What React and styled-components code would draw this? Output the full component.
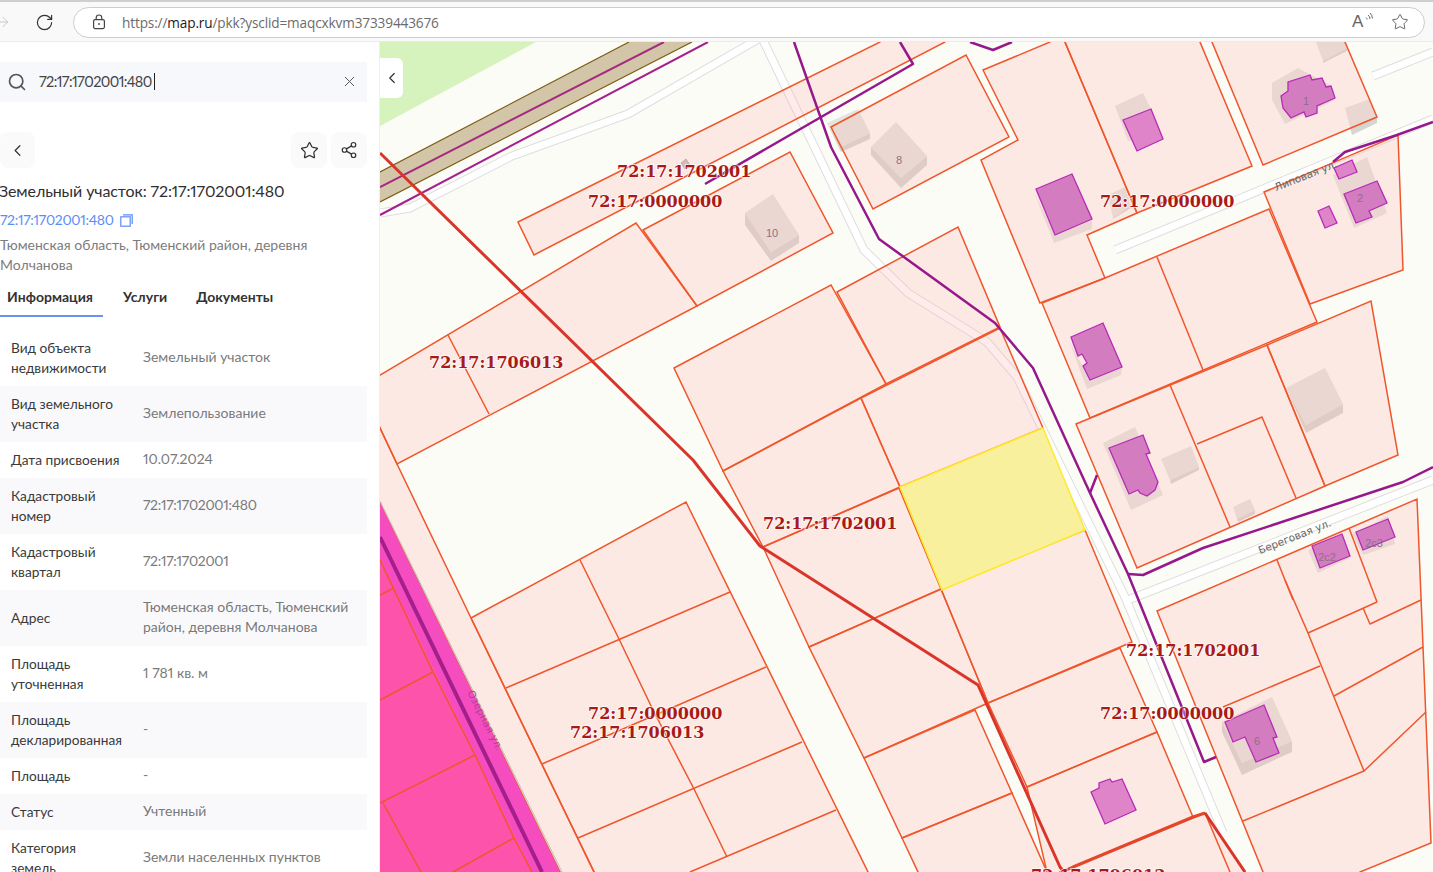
import React from 'react';
import styled, { createGlobalStyle } from 'styled-components';
import { ArrowRight, ChevronLeft, RotateCw, Search, Share2, Star, X } from 'lucide-react';

const GlobalStyle = createGlobalStyle`
  html, body { margin: 0; padding: 0; background: #fff; overflow: hidden; }
  * { box-sizing: border-box; }
`;

const rows = [
  { label: 'Вид объекта недвижимости', value: 'Земельный участок' },
  { label: 'Вид земельного участка', value: 'Землепользование' },
  { label: 'Дата присвоения', value: '10.07.2024' },
  { label: 'Кадастровый номер', value: '72:17:1702001:480', numeric: true },
  { label: 'Кадастровый квартал', value: '72:17:1702001', numeric: true },
  { label: 'Адрес', value: 'Тюменская область, Тюменский район, деревня Молчанова' },
  { label: 'Площадь уточненная', value: '1 781 кв. м' },
  { label: 'Площадь декларированная', value: '-' },
  { label: 'Площадь', value: '-' },
  { label: 'Статус', value: 'Учтенный' },
  { label: 'Категория\nземель', value: 'Земли населенных пунктов' },
];

// map geometry, in page pixels
const roads = [
  '380,213 410,208 512,156 628,114 760,38',
  '762,38 864,250 908,293 987,342 1017,377 1125,597 1223,833',
  '1128,600 1433,480',
  '1115,250 1433,119',
  '1373,76 1433,52',
];

const grayBuildings = [
  { top: '745,213 773,194 799,235 771,252', side: '745,213 771,252 799,235 799,243 771,261 745,225' },
  { top: '871,147 896,122 927,156 901,178', side: '871,147 901,178 927,156 927,165 901,188 871,155' },
  { top: '827,123 858,109 870,133 841,147', side: '827,123 841,147 870,133 870,139 841,152' },
  { top: '1316,42 1345,42 1347,48 1323,61', side: '1323,61 1347,48 1347,51 1323,63' },
  { top: '1345,108 1370,99 1377,117 1350,127', side: '1350,127 1377,117 1377,123 1352,135' },
  { top: '1108,195 1125,187 1131,205 1113,218', side: '1113,218 1131,205 1131,208 1113,219' },
  { top: '1286,388 1325,368 1343,404 1306,425', side: '1286,388 1306,425 1343,404 1343,413 1306,433' },
  { top: '1161,459 1191,446 1199,467 1170,480', side: '1170,480 1199,467 1199,470 1171,484' },
  { top: '1233,507 1250,499 1255,510 1237,519', side: '1237,519 1255,510 1255,514 1238,522' },
  { top: '1272,83 1298,68 1330,85 1335,100 1285,124 1272,100' },
  { top: '1115,106 1143,93 1151,109 1163,139 1128,141' },
  { top: '1034,192 1054,243 1092,229 1092,219 1055,235' },
  { top: '1333,175 1367,157 1387,213 1354,228' },
  { top: '1070,343 1087,389 1121,375 1122,367 1090,380' },
  { top: '1103,443 1135,427 1163,495 1131,510' },
  { top: '1222,722 1272,697 1292,741 1242,763', side: '1222,722 1242,763 1292,741 1292,752 1242,775 1222,732' },
  { top: '1308,550 1342,536 1350,558 1318,573' },
  { top: '1352,534 1388,516 1395,544 1363,555' },
];

// edges that fall on the map border run a little past it, so they stay unseen
const parcels = [
  '518,222 880,42 880,34 945,34 945,42 534,255',
  '643,230 790,152 833,233 697,306',
  '370,381 636,223 697,306 397,464 370,407',
  '674,368 831,285 886,384 723,471',
  '837,292 958,227 1000,327 886,384',
  '861,398 1000,328 1043,428 900,487',
  '723,471 861,398 900,487 763,547',
  '763,547 899,488 941,589 809,647',
  '809,647 941,589 988,703 864,758',
  '941,589 1085,530 1132,642 988,703',
  '864,758 975,710 1012,793 902,838',
  '902,838 1012,793 1047,872 1047,880 918,880 918,872',
  '988,703 1120,648 1157,732 1027,787',
  '1027,787 1157,732 1193,817 1073,867 1060,872 1060,880 1047,880 1047,872',
  '1073,867 1205,813 1245,872 1245,880 1060,880 1060,872',
  '831,127 966,55 1009,137 873,209',
  '983,70 1050,42 1050,34 1065,34 1065,42 1137,213 1087,235 1105,278 1040,303 981,160 1018,140',
  '1065,42 1065,34 1200,34 1200,42 1252,166 1137,213',
  '1212,42 1212,34 1345,34 1345,42 1377,117 1263,165',
  '1264,192 1398,135 1403,270 1310,304',
  '1042,303 1105,278 1269,209 1317,322 1090,418',
  '1267,345 1371,301 1398,455 1325,486',
  '1076,424 1267,345 1325,486 1137,568',
  '1157,611 1417,499 1431,843 1360,872 1360,880 1263,880 1263,872',
  '471,618 686,502 868,872 868,880 594,880 594,872',
  '370,407 397,464 471,618 594,872 594,880 560,880 560,872 370,483',
];

const dividers = [
  '448,335 489,414',
  '1157,257 1203,370',
  '1170,385 1230,527',
  '1197,444 1262,417 1296,498',
  '1243,821 1364,771 1426,712',
  '1223,707 1320,666',
  '1285,580 1308,633 1364,771',
  '1308,633 1377,602',
  '1277,560 1293,600',
  '1349,528 1377,602',
  '1363,608 1370,624 1421,600',
  '1334,696 1423,647',
  '506,688 730,592',
  '542,764 766,667',
  '578,838 802,742',
  '836,810 690,872',
  '580,560 619,639 653,710 694,789 727,857',
  '1205,813 1230,872',
];

const pinkLines = [
  '380,560 433,672 475,755 514,838 532,872',
  '394,588 380,595',
  '433,672 380,700',
  '475,755 380,803',
  '514,838 453,872',
  '383,803 421,872',
];

const houses = [
  { points: '1281,96 1288,91 1288,82 1310,75 1312,80 1322,78 1326,87 1331,86 1335,98 1317,106 1317,113 1306,117 1304,112 1291,118 1283,108' },
  { points: '1123,120 1151,109 1163,139 1137,151', light: true },
  { points: '1036,189 1072,174 1092,219 1055,235' },
  { points: '1344,194 1377,181 1387,203 1369,211 1372,217 1356,223' },
  { points: '1334,168 1352,160 1357,172 1339,179', light: true },
  { points: '1318,211 1329,206 1337,223 1325,228', light: true },
  { points: '1071,337 1103,323 1122,367 1090,380 1083,366 1087,363 1082,354 1078,356' },
  { points: '1109,448 1143,435 1150,453 1146,454 1158,482 1155,490 1147,496 1140,493 1138,490 1129,494' },
  { points: '1312,546 1342,534 1350,556 1320,568' },
  { points: '1356,532 1388,519 1395,537 1363,550' },
  { points: '1225,722 1264,705 1277,737 1273,738 1279,753 1256,762 1245,737 1233,742' },
  { points: '1091,792 1099,788 1099,783 1110,779 1112,782 1122,779 1136,810 1105,824', light: true },
];

const purpleLines = [
  '794,42 831,147 879,239 995,323 1033,368 1090,493 1128,574 1204,762 1216,757',
  '705,184 913,64 900,42',
  '970,42 993,50 1012,42',
  '1128,574 1143,575 1203,548 1403,482 1433,467',
  '1090,493 1097,475',
  '1333,162 1345,152 1397,135 1433,122',
];

const cadastreLabels = [
  { x: 617, y: 177, text: '72:17:1702001' },
  { x: 588, y: 207, text: '72:17:0000000' },
  { x: 429, y: 368, text: '72:17:1706013' },
  { x: 1100, y: 207, text: '72:17:0000000' },
  { x: 763, y: 529, text: '72:17:1702001' },
  { x: 1126, y: 656, text: '72:17:1702001' },
  { x: 588, y: 719, text: '72:17:0000000' },
  { x: 570, y: 738, text: '72:17:1706013' },
  { x: 1100, y: 719, text: '72:17:0000000' },
  { x: 1031, y: 881, text: '72:17:1706013' },
];

const houseNumbers = [
  { x: 772, y: 237, text: '10' },
  { x: 899, y: 164, text: '8' },
  { x: 1306, y: 105, text: '1' },
  { x: 1360, y: 202, text: '2' },
  { x: 1327, y: 561, text: '2с2' },
  { x: 1374, y: 547, text: '2с3' },
  { x: 1257, y: 745, text: '6' },
];

const streets = [
  { x: 1307, y: 179, angle: -21.5, text: 'Липовая ул.' },
  { x: 1296, y: 540, angle: -21.5, text: 'Береговая ул.' },
  { x: 482, y: 722, angle: 63, text: 'Озерная ул.' },
];

const Page = styled.div`
  width: 1433px;
  height: 872px;
  display: flex;
  flex-direction: column;
  overflow: hidden;
  background: #fff;
`;

const BrowserBar = styled.header`
  position: relative;
  flex: 0 0 42px;
  display: flex;
  align-items: center;
  padding: 1px 8px 0 0;
  background: #f9f9f9;
  border-top: 2px solid #cfcfcf;
  border-bottom: 1px solid #ebebeb;
`;

const NavSlot = styled.span`
  flex: 0 0 ${(p) => p.$width}px;
  display: flex;
  align-items: center;
  justify-content: ${(p) => p.$align || 'center'};
  color: ${(p) => p.$color || '#333'};
`;

const AddressPill = styled.div`
  flex: 1;
  height: 31px;
  display: flex;
  align-items: center;
  padding: 0 15px 0 18px;
  background: #fff;
  border: 1px solid #cdcdcd;
  border-radius: 16px;
`;

const UrlText = styled.span`
  flex: 1;
  margin-left: 16px;
  font: 13.6px "Open Sans", sans-serif;
  letter-spacing: -0.13px;
  color: #6b6b6b;
`;

const UrlHost = styled.span`
  color: #1a1a1a;
`;

const ReadAloud = styled.span`
  position: relative;
  width: 16px;
  height: 16px;
  margin-right: 23px;
  font: 17px/16px "Liberation Sans", sans-serif;
  color: #666;
`;

const ReadWaves = styled.svg`
  position: absolute;
  right: -5px;
  top: -2px;
`;

const Workspace = styled.div`
  flex: 1;
  min-height: 0;
  display: flex;
`;

const SidePanel = styled.aside`
  flex: 0 0 380px;
  height: 100%;
  padding: 20px 12px 0 0;
  overflow: hidden;
  background: #fff;
  border-right: 1px solid #efefef;
  font-family: "Lato", "Open Sans", sans-serif;
  font-variant-numeric: proportional-nums;
`;

const SearchBox = styled.div`
  height: 40px;
  display: flex;
  align-items: center;
  padding: 0 9px 1px 7px;
  background: #f7f8fc;
  color: #555;
`;

const SearchValue = styled.span`
  flex: 1;
  margin-left: 12px;
  font-size: 14.5px;
  letter-spacing: -0.6px;
  color: #444;
`;

const Caret = styled.span`
  display: inline-block;
  width: 1px;
  height: 17px;
  margin-left: 2px;
  vertical-align: -3px;
  background: #222;
`;

const ActionRow = styled.div`
  margin-top: 30px;
  display: flex;
  gap: 4px;
`;

const SquareButton = styled.button`
  width: ${(p) => p.$width || 36}px;
  height: 36px;
  padding: 0;
  display: flex;
  align-items: center;
  justify-content: center;
  background: #fafafb;
  border: 0;
  border-radius: 8px;
  color: #333;
`;

const Spacer = styled.span`
  flex: 1;
`;

const Title = styled.h1`
  margin: 13px 0 0 -1px;
  font-size: 16px;
  line-height: 20px;
  font-weight: 400;
  letter-spacing: -0.1px;
  color: #2f2f2f;
`;

const CadastreLink = styled.div`
  margin-top: 9px;
  display: flex;
  align-items: center;
  gap: 6px;
  font-size: 14px;
  line-height: 20px;
  letter-spacing: -0.3px;
  color: #5c8df6;
`;

const AddressLine = styled.p`
  width: 330px;
  margin: 5px 0 0;
  font-size: 14px;
  line-height: 20px;
  color: #7c7c7c;
`;

const Tabs = styled.nav`
  margin-top: 11px;
  display: flex;
  height: 31px;
`;

const Tab = styled.span`
  padding: 0 ${(p) => p.$pad}px 0 ${(p) => p.$left}px;
  height: 31px;
  line-height: 22px;
  font-size: 14px;
  font-weight: 700;
  color: #333;
  border-bottom: ${(p) => (p.$active ? '2px solid #6a92ee' : '0')};
`;

const InfoTable = styled.dl`
  margin: 13px 0 0;
`;

const InfoRow = styled.div`
  display: grid;
  grid-template-columns: 132px 1fr;
  align-items: center;
  padding: 8px 11px;
  background: ${(p) => (p.$shaded ? '#f9f9fc' : '#fff')};
`;

const InfoLabel = styled.dt`
  max-width: 120px;
  font-size: 13.7px;
  line-height: 20px;
  white-space: pre-line;
  color: #3a3a3a;
`;

const InfoValue = styled.dd`
  margin: 0;
  font-size: 14px;
  line-height: 20px;
  letter-spacing: ${(p) => (p.$numeric ? '-0.3px' : '0')};
  color: #7a7a7a;
  transform: translateY(-1px);
`;

const MapArea = styled.main`
  position: relative;
  flex: 1;
  overflow: hidden;
  background: #fcfcf7;
`;

const MapCanvas = styled.svg`
  display: block;
`;

const CollapseTab = styled.button`
  position: absolute;
  left: 0;
  top: 16px;
  width: 23px;
  height: 40px;
  padding: 0;
  display: flex;
  align-items: center;
  justify-content: center;
  background: #fff;
  border: 0;
  border-radius: 0 6px 6px 0;
  color: #333;
`;

const RoadCasing = styled.polyline`
  fill: none;
  stroke: #dedede;
  stroke-width: 9;
  stroke-linejoin: round;
`;

const RoadFill = styled.polyline`
  fill: none;
  stroke: #fff;
  stroke-width: 7;
  stroke-linejoin: round;
`;

const BuildingTop = styled.polygon`
  fill: #e4e4de;
`;

const BuildingSide = styled.polygon`
  fill: #d5d6d0;
`;

const Parcel = styled.polygon`
  fill: rgba(252, 179, 174, 0.26);
  stroke: #f0562b;
  stroke-width: 1.5;
  stroke-linejoin: miter;
`;

const ParcelLine = styled.polyline`
  fill: none;
  stroke: ${(p) => p.$color || '#f0562b'};
  stroke-width: ${(p) => p.$width || 1.5};
  stroke-linejoin: round;
`;

const SelectedParcel = styled.polygon`
  fill: #f9f09e;
  stroke: #ffe92a;
  stroke-width: 1.5;
`;

const House = styled.polygon`
  fill: ${(p) => (p.$light ? '#e084ca' : '#d47cc0')};
  stroke: #b62ab6;
  stroke-width: 1.3;
`;

const CadastreLabel = styled.text`
  font: bold 16px "DejaVu Serif", serif;
  fill: #a81a18;
  stroke: rgba(255, 255, 255, 0.65);
  stroke-width: 2px;
  paint-order: stroke;
`;

const HouseNumber = styled.text`
  font: 11px "Liberation Sans", sans-serif;
  fill: #8f6f88;
  text-anchor: middle;
`;

const StreetName = styled.text`
  font: 10.5px "DejaVu Sans", sans-serif;
  fill: ${(p) => p.$color || '#666'};
  text-anchor: middle;
`;

function LockIcon() {
  return (
    <svg width="14" height="16" viewBox="0 0 14 16" fill="none" stroke="#444" strokeWidth="1.2">
      <rect x="1.6" y="5.6" width="10.8" height="9" rx="1.5" />
      <path d="M4.2 5.6V3.8a2.8 2.8 0 0 1 5.6 0v1.8" />
      <circle cx="7" cy="10" r="0.9" fill="#444" stroke="none" />
    </svg>
  );
}

function CopyIcon() {
  return (
    <svg width="13" height="13" viewBox="0 0 13 13" fill="none" stroke="#5c8df6" strokeWidth="1.2">
      <rect x="0.8" y="2.8" width="9.4" height="9.4" />
      <path d="M3 0.8h9.2V10" />
    </svg>
  );
}

function MapDrawing() {
  return (
    <MapCanvas width="1053" height="830" viewBox="380 42 1053 830">
      <polygon points="380,42 536,42 380,126" fill="#d6f3bd" />
      {roads.map((r) => <RoadCasing key={r} points={r} />)}
      {roads.map((r) => <RoadFill key={r} points={r} />)}
      <polygon points="380,172 629,42 692,42 380,202" fill="#d3c6a8" />
      <ParcelLine points="380,172 629,42" $color="#7b5a12" $width={1.2} />
      <ParcelLine points="380,202 692,42" $color="#7b5a12" $width={1.2} />
      <ParcelLine points="380,187 664,42" $color="#a52a80" $width={2} />
      <ParcelLine points="380,215 708,42" $color="#a5208f" $width={2} />

      {grayBuildings.map((b) => (
        <g key={b.top}>
          <BuildingTop points={b.top} />
          {b.side && <BuildingSide points={b.side} />}
        </g>
      ))}
      <polygon points="681,163 686,159 690,165 685,169" fill="#c8bdb8" stroke="#999" strokeWidth="0.7" />

      {parcels.map((p) => <Parcel key={p} points={p} />)}
      <SelectedParcel points="900,487 1043,428 1085,530 942,590" />
      {dividers.map((d) => <ParcelLine key={d} points={d} />)}

      <polygon points="380,503 560,872 380,872" fill="#f54dc0" />
      <polygon points="380,558 533,872 380,872" fill="#fd53ab" />
      <ParcelLine points="380,501 562,872" $color="#bdbdbd" $width={1} />
      <ParcelLine points="380,537 542,872" $color="#a21f8c" $width={4} />
      {pinkLines.map((l) => <ParcelLine key={l} points={l} />)}

      {houses.map((h) => <House key={h.points} points={h.points} $light={h.light} />)}
      {houseNumbers.map((n) => <HouseNumber key={n.text} x={n.x} y={n.y}>{n.text}</HouseNumber>)}

      <ParcelLine points="380,153 693,460 760,546 978,685 1060,867 1064,872" $color="#d9352a" $width={3} />
      <ParcelLine points="1062,872 1073,867 1193,817 1205,813" $color="#e5462a" $width={3} />
      <ParcelLine points="1205,813 1245,872" $color="#d9352a" $width={3} />
      {purpleLines.map((l) => <ParcelLine key={l} points={l} $color="#96198c" $width={2.5} />)}

      {streets.map((s) => (
        <StreetName
          key={s.text}
          x={s.x}
          y={s.y}
          $color={s.angle > 0 ? '#b040a0' : undefined}
          transform={`rotate(${s.angle} ${s.x} ${s.y})`}
        >
          {s.text}
        </StreetName>
      ))}
      {cadastreLabels.map((l) => (
        <CadastreLabel key={`${l.x}-${l.y}`} x={l.x} y={l.y}>{l.text}</CadastreLabel>
      ))}
    </MapCanvas>
  );
}

export default function App() {
  return (
    <Page>
      <GlobalStyle />
      <BrowserBar>
        <NavSlot $width={27} $align="flex-start" $color="#c4c4c4"><ArrowRight size={16} strokeWidth={1.4} style={{ marginLeft: -5 }} /></NavSlot>
        <NavSlot $width={34}><RotateCw size={19} strokeWidth={1.5} /></NavSlot>
        <NavSlot $width={12} />
        <AddressPill>
          <LockIcon />
          <UrlText>https://<UrlHost>map.ru</UrlHost>/pkk?ysclid=maqcxkvm37339443676</UrlText>
          <ReadAloud>
            A
            <ReadWaves width="8" height="10" viewBox="0 0 8 10" fill="none" stroke="#666" strokeWidth="1">
              <path d="M1 5.5a2 2 0 0 1 1 2M3 3a5 5 0 0 1 2 4M5 1a8 8 0 0 1 2.5 5.5" />
            </ReadWaves>
          </ReadAloud>
          <Star size={18} strokeWidth={1.2} color="#555" />
        </AddressPill>
      </BrowserBar>
      <Workspace>
        <SidePanel>
          <SearchBox>
            <Search size={20} strokeWidth={2} />
            <SearchValue>72:17:1702001:480<Caret /></SearchValue>
            <X size={17} strokeWidth={1.4} />
          </SearchBox>
          <ActionRow>
            <SquareButton $width={35}><ChevronLeft size={19} strokeWidth={1.5} /></SquareButton>
            <Spacer />
            <SquareButton><Star size={19} strokeWidth={1.6} /></SquareButton>
            <SquareButton><Share2 size={18} strokeWidth={1.6} /></SquareButton>
          </ActionRow>
          <Title>Земельный участок: 72:17:1702001:480</Title>
          <CadastreLink>72:17:1702001:480 <CopyIcon /></CadastreLink>
          <AddressLine>Тюменская область, Тюменский район, деревня Молчанова</AddressLine>
          <Tabs>
            <Tab $active $left={7} $pad={10}>Информация</Tab>
            <Tab $left={20} $pad={15}>Услуги</Tab>
            <Tab $left={14} $pad={0}>Документы</Tab>
          </Tabs>
          <InfoTable>
            {rows.map((row, i) => (
              <InfoRow key={row.label} $shaded={i % 2 === 1}>
                <InfoLabel>{row.label}</InfoLabel>
                <InfoValue $numeric={row.numeric}>{row.value}</InfoValue>
              </InfoRow>
            ))}
          </InfoTable>
        </SidePanel>
        <MapArea>
          <MapDrawing />
          <CollapseTab><ChevronLeft size={18} strokeWidth={1.6} /></CollapseTab>
        </MapArea>
      </Workspace>
    </Page>
  );
}
